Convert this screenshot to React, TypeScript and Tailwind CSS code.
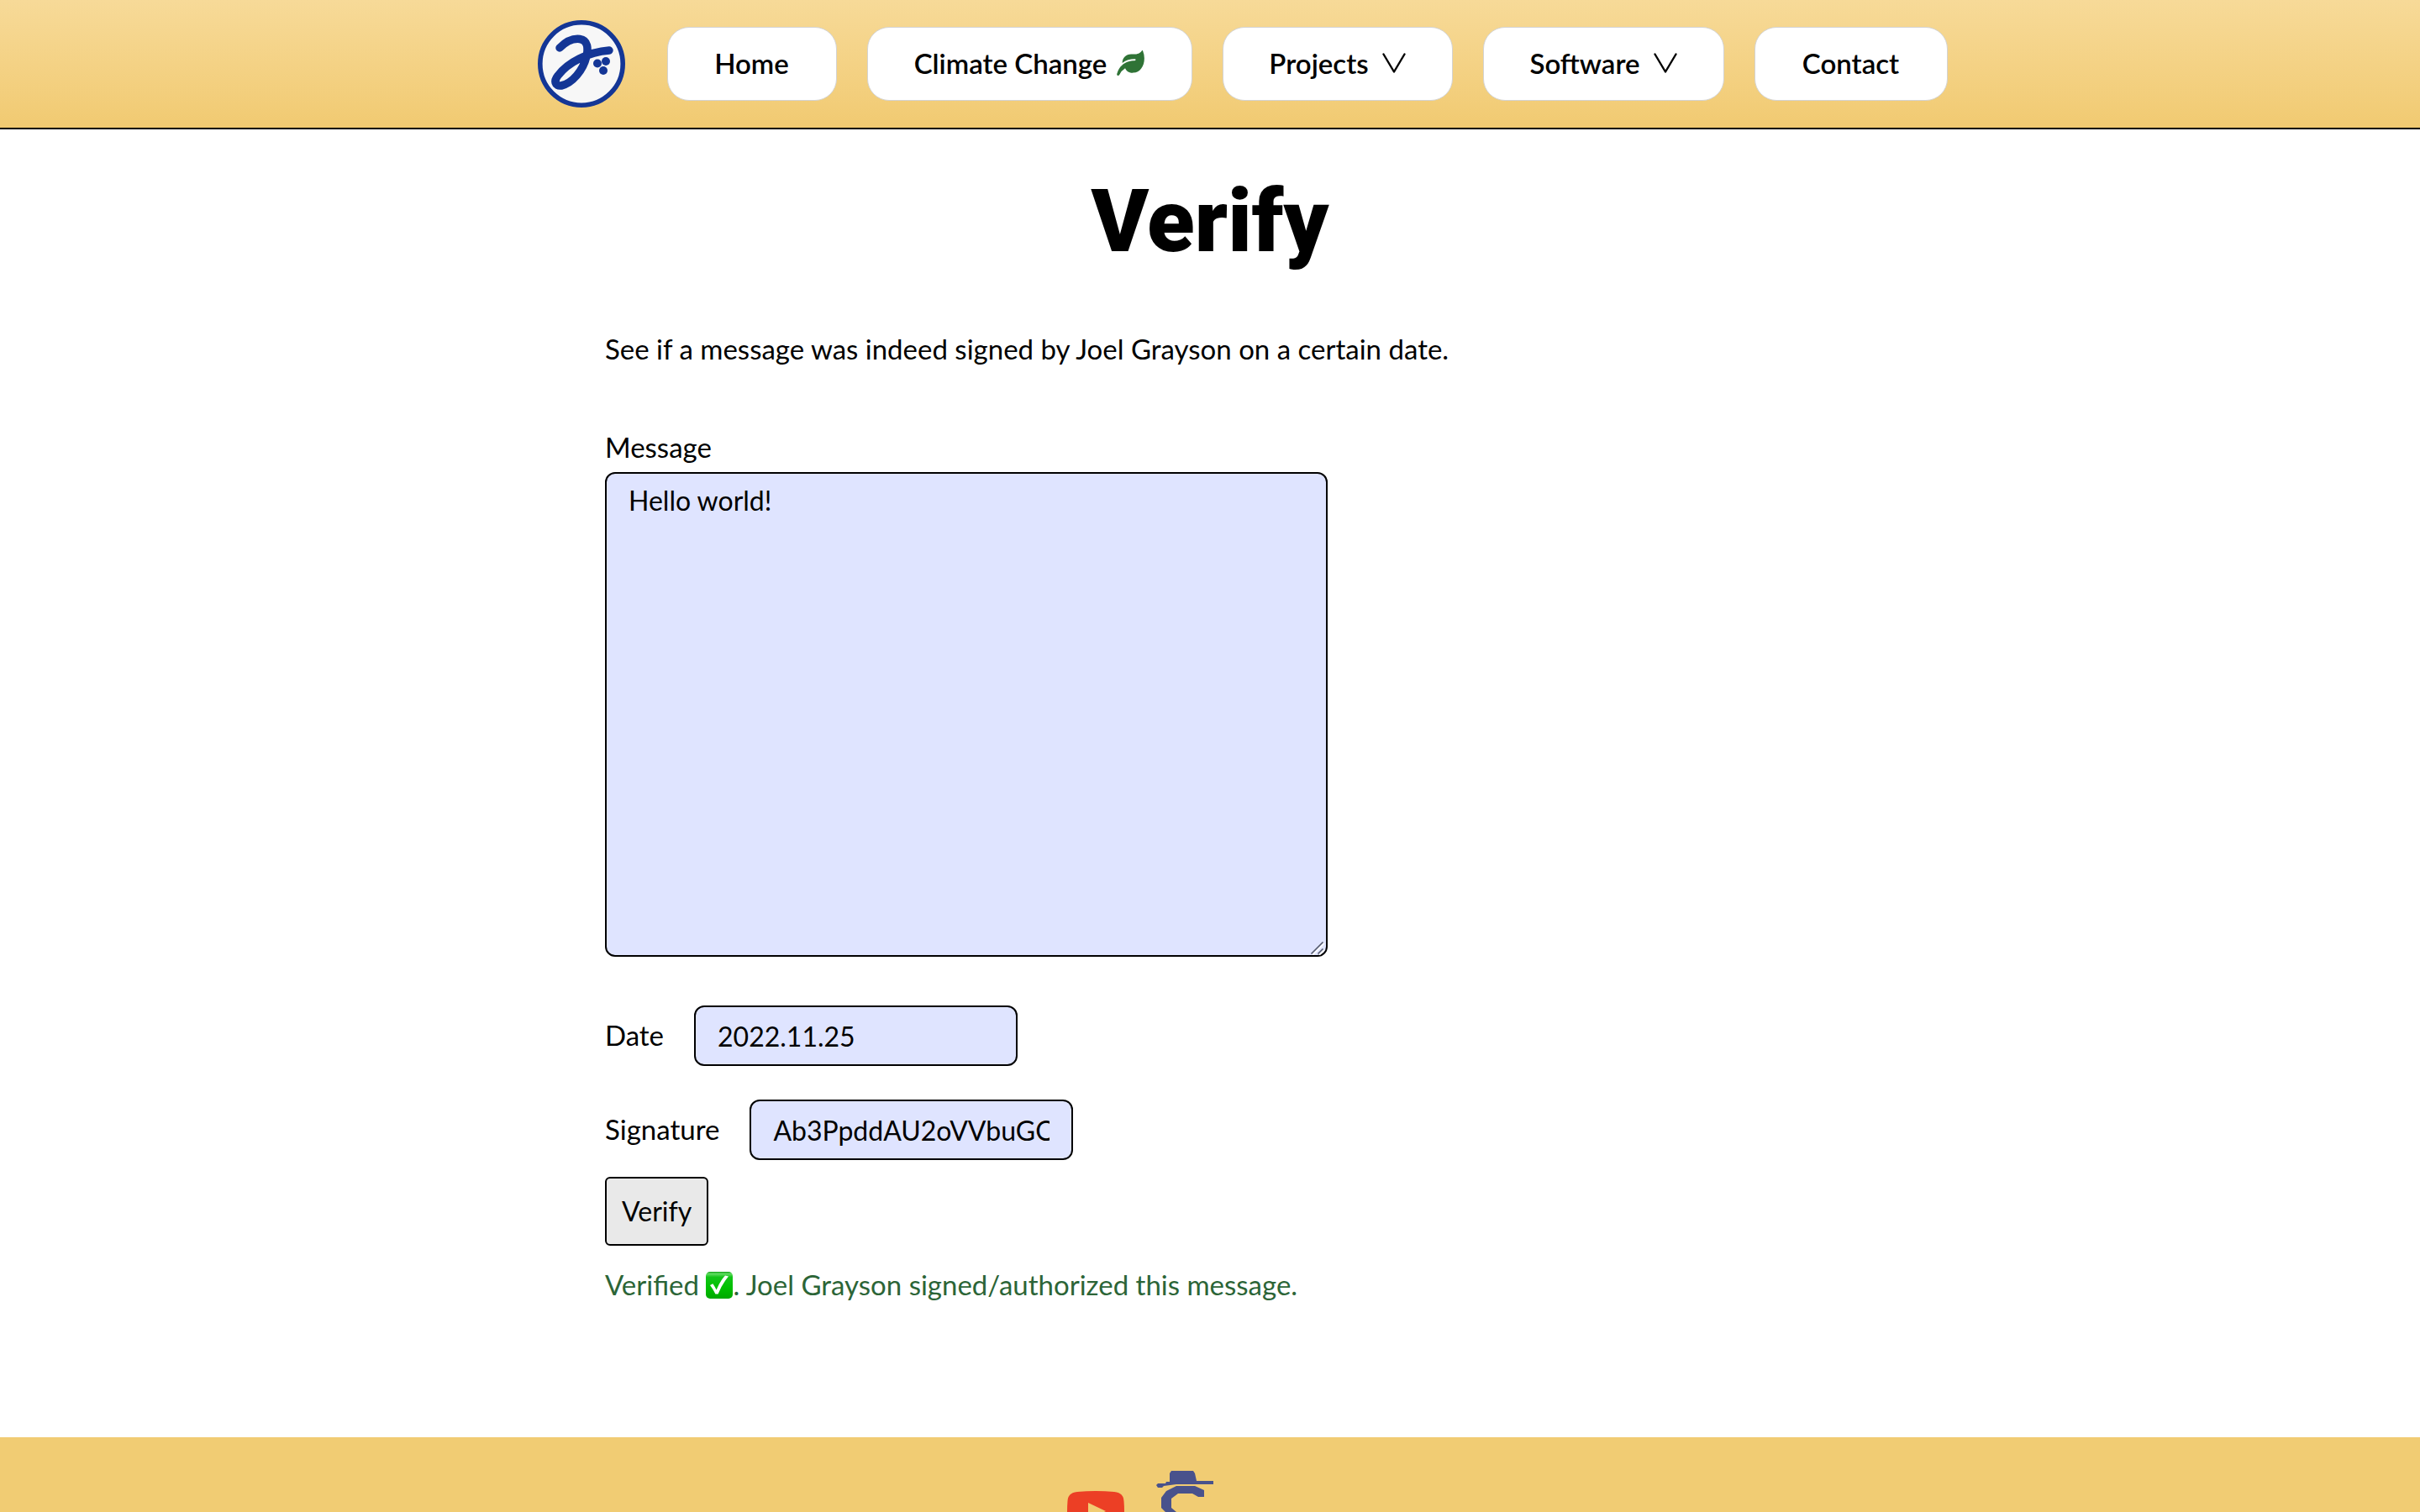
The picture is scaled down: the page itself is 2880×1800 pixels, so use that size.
import React from "react";

function Logo() {
  return (
    <svg viewBox="0 0 104 104" className="size-[104px]" aria-hidden="true">
      <circle cx="52" cy="52" r="49.2" fill="#f7f7f7" stroke="#143696" strokeWidth="5.6" />
      <path
        d="M26 33 C33 26 42 21.500 50 22.500 C60 24 60 34 58 43 C54 60 41 75 28 78 C20 79 19 72 24 66 C36 50 60 38 85 36"
        fill="none"
        stroke="#143696"
        strokeWidth="9.5"
        strokeLinecap="round"
        strokeLinejoin="round"
      />
      <g fill="#143696">
        <circle cx="71" cy="51.500" r="5" />
        <circle cx="81" cy="49" r="5" />
        <circle cx="78" cy="60" r="5" />
      </g>
    </svg>
  );
}

function Leaf() {
  return (
    <svg viewBox="0 0 96 88" className="h-[30px] w-[33px]" aria-hidden="true">
      <path
        d="M88 0 Q90 -1 91 2 Q96 14 96 28 C96 56 80 78 58 78 C46 79 34 74 29 62 Q16 70 9 85 Q6 89 2 87 Q-1 85 1 80 C5 68 10 58 18 52 C30 40 46 36 62 36 Q66 35 66 32.500 Q66 30 62 30 C46 30 32 34 19 44 C19 26 32 13 50 13 C66 14 80 14 88 0 Z"
        fill="#2f7336"
      />
    </svg>
  );
}

function Chevron() {
  return (
    <svg viewBox="0 0 28 24" className="h-6 w-7" fill="none" stroke="#000" strokeWidth="2.4" strokeLinecap="round" strokeLinejoin="round" aria-hidden="true">
      <path d="M1.5 1.5 L14 22.5 L26.5 1.5" />
    </svg>
  );
}

function CheckMark() {
  return (
    <svg viewBox="0 0 32 32" className="inline-block size-8 align-[-4px]" role="img" aria-label="check">
      <defs>
        <linearGradient id="check-fill" x1="0" y1="0" x2="0" y2="1">
          <stop offset="0" stopColor="#12a316" />
          <stop offset="0.08" stopColor="#5fdc60" />
          <stop offset="0.2" stopColor="#13c418" />
          <stop offset="0.6" stopColor="#00c000" />
          <stop offset="1" stopColor="#00a800" />
        </linearGradient>
      </defs>
      <rect width="32" height="32" rx="5" fill="url(#check-fill)" />
      <path d="M5 16 L8.4 14.200 Q10.8 17.6 12.6 21.600 Q16.5 11.5 23 4.6 L27 5.4 Q19 15 14.600 26.6 L11.4 26.6 Q8.6 20.600 5 16 Z" fill="#fff" />
    </svg>
  );
}

function ResizeGrip() {
  return (
    <svg viewBox="0 0 18 18" className="pointer-events-none absolute right-[3px] bottom-[2px] size-[18px]" fill="none" strokeWidth="1.6" aria-hidden="true">
      <path d="M3 18 L17 4 M11 18 L17 12" stroke="#fff" />
      <path d="M1.500 16.500 L15.500 2.500 M9.500 16.500 L15.500 10.500" stroke="#555a6b" />
    </svg>
  );
}

function YouTubeIcon() {
  return (
    <svg viewBox="0 0 68 48" className="mt-6 h-12 w-[68px]" aria-hidden="true">
      <path d="M12 1 Q34 -1 56 1 Q67 2 67.500 12 Q68.500 24 67.500 36 Q67 46 56 47 Q34 49 12 47 Q1 46 0.500 36 Q-0.500 24 0.500 12 Q1 2 12 1 Z" fill="#ec3f25" />
      <path d="M25 14 L46 24 L25 34 Z" fill="#f1cc73" />
    </svg>
  );
}

function HatIcon() {
  return (
    <svg viewBox="0 0 68 80" className="h-20 w-[68px]" aria-hidden="true">
      <path d="M18 0 H44 L46 3 L48 12 H68 V16 H46 L24 16 L9 18 L7 20 H2 L0 17 L2 15 H11 L12 13 H16 V3 Z" fill="#49528c" />
      <path d="M24 18 H46 L57 23 V31 H50 L43 27 H26 L18 33 V44 L24 49 L50 60 V72 L40 80 H20 L10 74 V66 L24 70 H36 L40 66 L14 52 L6 44 V32 L12 24 Z" fill="#49528c" />
    </svg>
  );
}

const links = [
  { label: "Home", width: "w-[202px]" },
  { label: "Climate Change", width: "w-[387px]", icon: <Leaf />, gap: "gap-3" },
  { label: "Projects", width: "w-[274px]", icon: <Chevron />, gap: "gap-4" },
  { label: "Software", width: "w-[287px]", icon: <Chevron />, gap: "gap-4" },
  { label: "Contact", width: "w-[230px]" },
];

const field = "rounded-xl border-2 border-black bg-[#dfe4ff] px-[26px] text-[32px] outline-none";

export default function App() {
  return (
    <div className="flex h-screen flex-col overflow-hidden bg-white font-['Lato',sans-serif] text-[33px] leading-[48px] text-black">
      <header className="shrink-0 border-b-2 border-black bg-linear-to-b from-[#f7da98] to-[#f1ca71]">
        <nav className="flex items-center justify-center py-6 pl-[77px]">
          <a href="#home" aria-label="Joel Grayson" className="mr-[50px]">
            <Logo />
          </a>
          <ul className="flex gap-9">
            {links.map((link) => (
              <li key={link.label}>
                <a
                  href="#"
                  className={`flex h-[88px] items-center justify-center rounded-[26px] border border-[#d3d3d3] bg-white pb-0.5 font-semibold whitespace-nowrap ${link.width} ${link.gap ?? ""}`}
                >
                  {link.label}
                  {link.icon}
                </a>
              </li>
            ))}
          </ul>
        </nav>
      </header>

      <main className="mx-auto w-1/2 shrink-0">
        <h1 className="pt-[46px] text-center font-['Roboto',sans-serif] text-[104px] leading-[128px] font-black">Verify</h1>
        <p className="mt-[63px]">See if a message was indeed signed by Joel Grayson on a certain date.</p>

        <form onSubmit={(e) => e.preventDefault()} className="mt-[69px]">
          <div className="flex flex-col items-start">
            <label htmlFor="message">Message</label>
            <div className="relative mt-1.5 flex">
              <textarea id="message" defaultValue="Hello world!" className={`${field} h-[577px] w-[860px] resize-none py-2`} />
              <ResizeGrip />
            </div>
          </div>
          <div className="mt-[58px] flex items-center gap-9">
            <label htmlFor="date" className="pb-0.5">Date</label>
            <input id="date" type="text" defaultValue="2022.11.25" className={`${field} h-[72px] w-[385px]`} />
          </div>
          <div className="mt-10 flex items-center gap-9">
            <label htmlFor="signature" className="pb-0.5">Signature</label>
            <input id="signature" type="text" defaultValue="Ab3PpddAU2oVVbuGQm7x" className={`${field} h-[72px] w-[385px]`} />
          </div>
          <button type="submit" className="mt-5 h-[82px] rounded-md border-2 border-black bg-[#e9e9e9] px-[18px] text-[32px]">
            Verify
          </button>
          <p className="mt-[22px] text-[#2c6537]">
            Verified <CheckMark />. Joel Grayson signed/authorized this message.
          </p>
        </form>
      </main>

      <footer className="mt-[158px] flex h-[300px] shrink-0 items-start justify-center gap-[38px] bg-[#f1cc73] pt-10 pr-[166px]">
        <a href="#youtube" aria-label="YouTube">
          <YouTubeIcon />
        </a>
        <a href="#scratch" aria-label="Profile">
          <HatIcon />
        </a>
      </footer>
    </div>
  );
}
